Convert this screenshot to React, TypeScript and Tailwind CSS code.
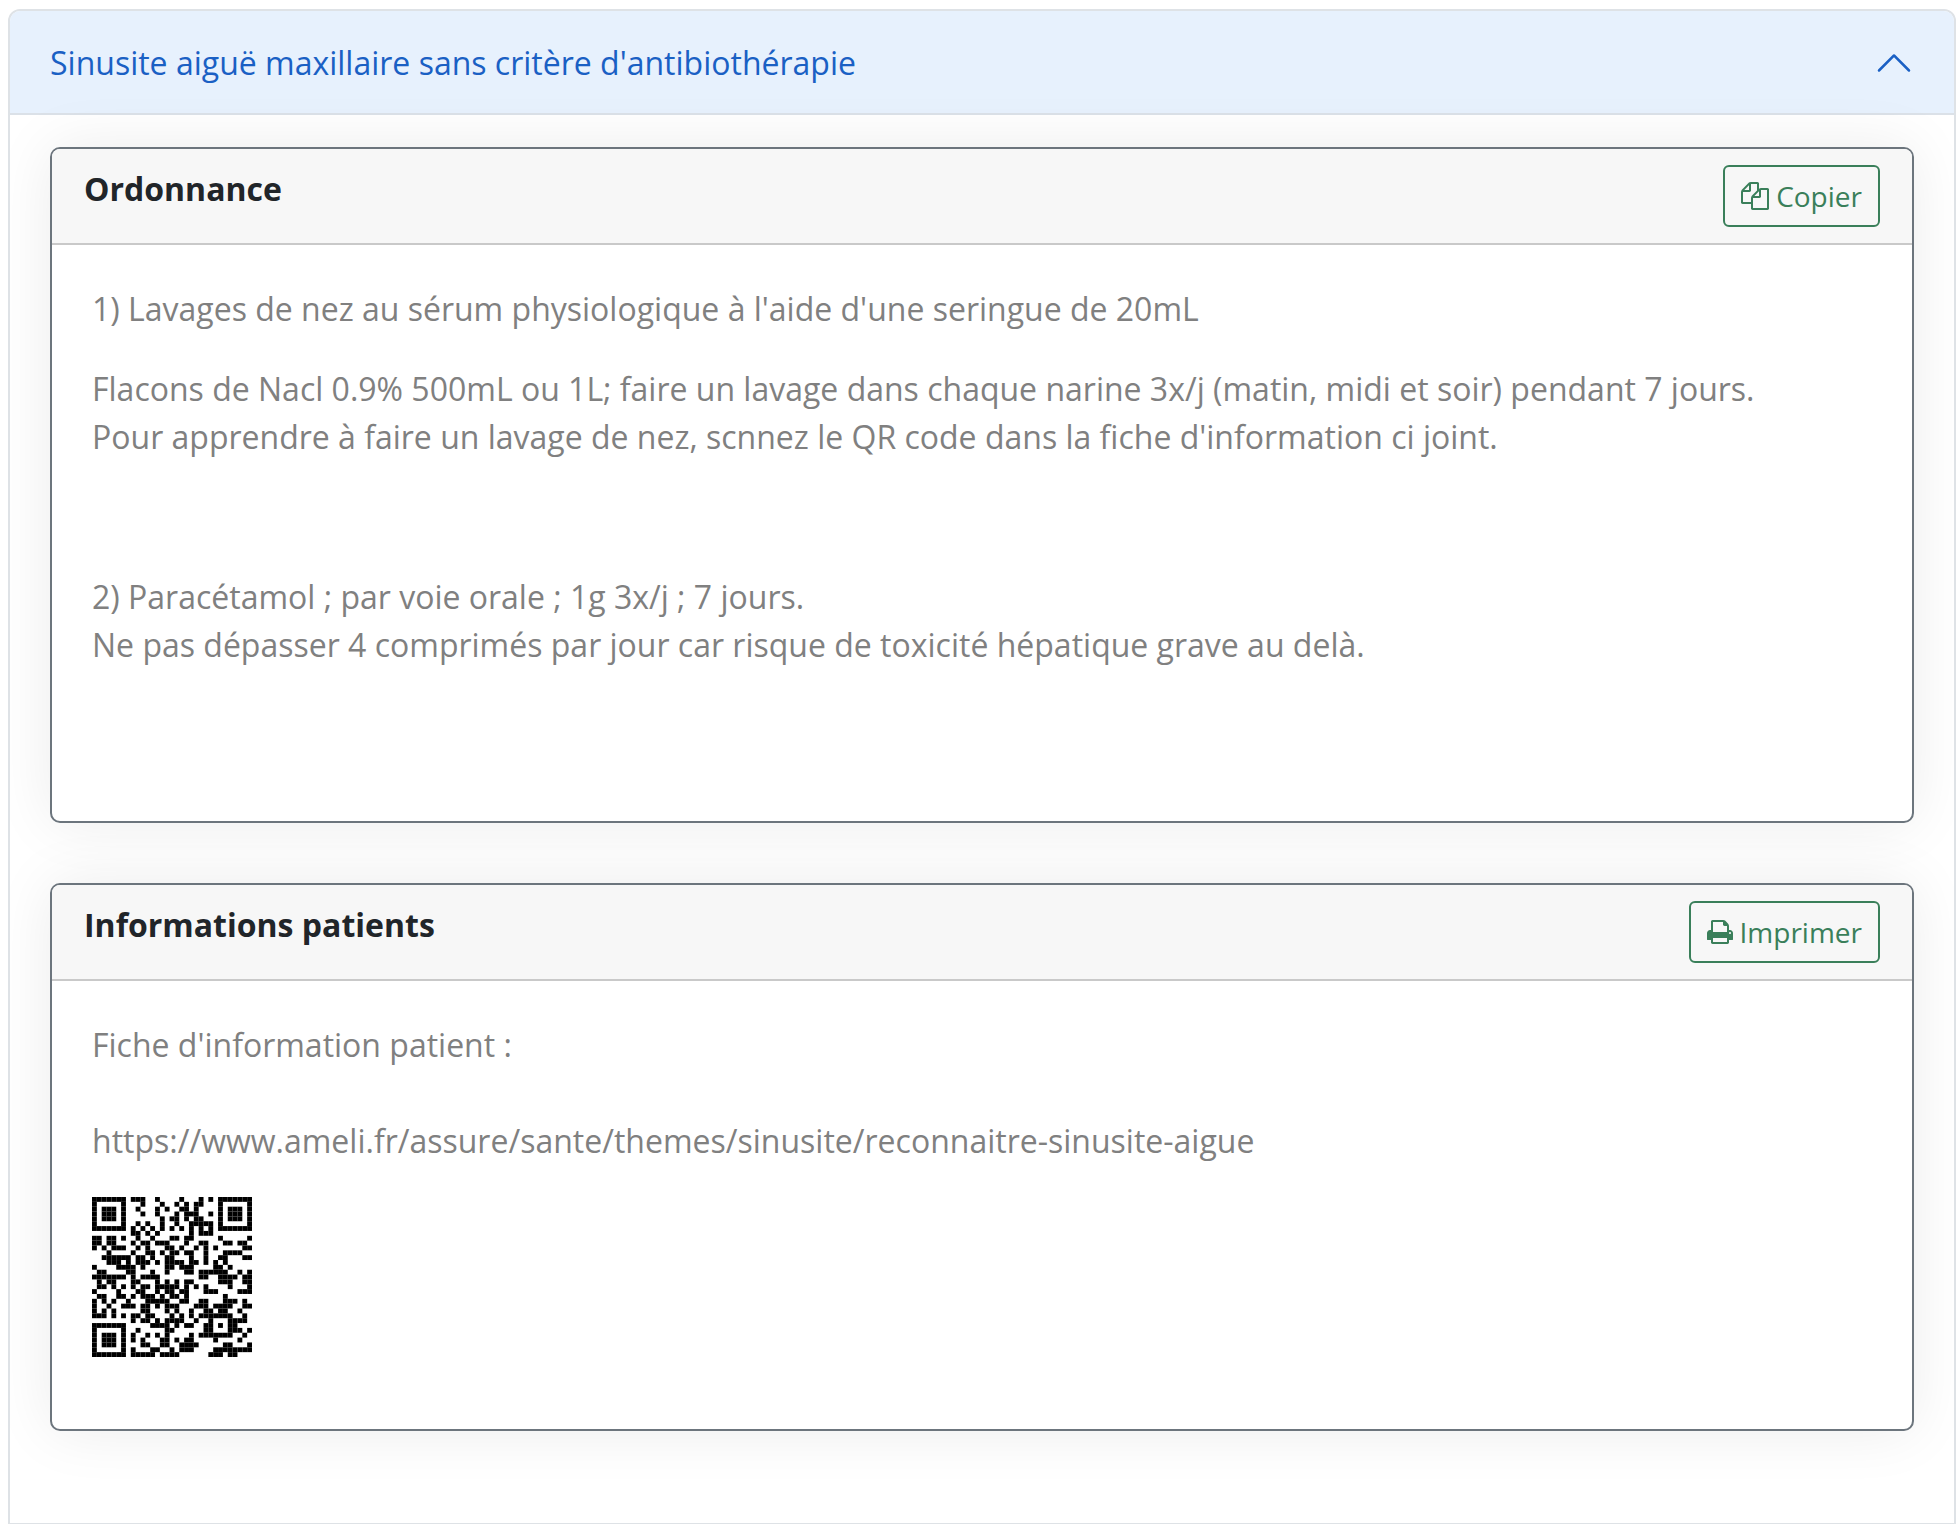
import { useState } from "react";
import type { ReactNode } from "react";

const FICHE_URL = "https://www.ameli.fr/assure/sante/themes/sinusite/reconnaitre-sinusite-aigue";

const QR_SIZE = 33;
const DATA_CODEWORDS = 80;
const EC_CODEWORDS = 20;
const FORMAT_BITS = "110110001000001"; // level L, mask 6

function gfMultiply(a: number, b: number) {
    let result = 0;
    for (let i = 7; i >= 0; i--) {
        result = (result << 1) ^ ((result >>> 7) * 0x11d);
        result ^= ((b >>> i) & 1) * a;
    }
    return result;
}

function errorCorrection(data: number[]) {
    const divisor: number[] = new Array(EC_CODEWORDS).fill(0);
    divisor[EC_CODEWORDS - 1] = 1;
    let root = 1;
    for (let i = 0; i < EC_CODEWORDS; i++) {
        for (let j = 0; j < EC_CODEWORDS; j++) {
            divisor[j] = gfMultiply(divisor[j], root);
            if (j + 1 < EC_CODEWORDS) divisor[j] ^= divisor[j + 1];
        }
        root = gfMultiply(root, 2);
    }

    const rest: number[] = new Array(EC_CODEWORDS).fill(0);
    for (const byte of data) {
        const factor = byte ^ (rest.shift() as number);
        rest.push(0);
        divisor.forEach((d, i) => {
            rest[i] ^= gfMultiply(d, factor);
        });
    }
    return rest;
}

// QR code version 4-L, byte mode (78 characters at most).
function buildQr(text: string) {
    let bits = "0100" + text.length.toString(2).padStart(8, "0");
    for (const char of text) bits += char.charCodeAt(0).toString(2).padStart(8, "0");
    bits += "0000";

    const data: number[] = [];
    for (let i = 0; i < bits.length; i += 8) data.push(parseInt(bits.slice(i, i + 8), 2));
    for (let pad = 0xec; data.length < DATA_CODEWORDS; pad ^= 0xec ^ 0x11) data.push(pad);
    const stream = [...data, ...errorCorrection(data)];

    const grid: (boolean | null)[][] = Array.from({ length: QR_SIZE }, () =>
        new Array(QR_SIZE).fill(null),
    );

    for (let i = 8; i < QR_SIZE - 8; i++) {
        grid[6][i] = i % 2 === 0;
        grid[i][6] = i % 2 === 0;
    }

    const finders = [
        [3, 3],
        [3, QR_SIZE - 4],
        [QR_SIZE - 4, 3],
    ];
    for (const [cy, cx] of finders) {
        for (let dy = -4; dy <= 4; dy++) {
            for (let dx = -4; dx <= 4; dx++) {
                const y = cy + dy;
                const x = cx + dx;
                if (y < 0 || x < 0 || y >= QR_SIZE || x >= QR_SIZE) continue;
                const ring = Math.max(Math.abs(dy), Math.abs(dx));
                grid[y][x] = ring !== 2 && ring !== 4;
            }
        }
    }
    for (let dy = -2; dy <= 2; dy++) {
        for (let dx = -2; dx <= 2; dx++) {
            grid[26 + dy][26 + dx] = Math.max(Math.abs(dy), Math.abs(dx)) !== 1;
        }
    }

    const format = [...FORMAT_BITS].map((bit) => bit === "1");
    const around = [0, 1, 2, 3, 4, 5, 7, 8];
    for (let i = 0; i < 8; i++) grid[8][around[i]] = format[i];
    for (let i = 8; i < 15; i++) grid[around[14 - i]][8] = format[i];
    for (let i = 0; i < 7; i++) grid[QR_SIZE - 1 - i][8] = format[i];
    for (let i = 7; i < 15; i++) grid[8][QR_SIZE - 15 + i] = format[i];
    grid[QR_SIZE - 8][8] = true;

    let index = 0;
    for (let right = QR_SIZE - 1; right >= 1; right -= 2) {
        if (right === 6) right = 5;
        for (let step = 0; step < QR_SIZE; step++) {
            const upward = ((right + 1) & 2) === 0;
            const y = upward ? QR_SIZE - 1 - step : step;
            for (const x of [right, right - 1]) {
                if (grid[y][x] !== null) continue;
                const byte = stream[index >> 3] ?? 0;
                const bit = ((byte >> (7 - (index & 7))) & 1) === 1;
                const masked = (((x * y) % 2) + ((x * y) % 3)) % 2 === 0;
                grid[y][x] = bit !== masked;
                index++;
            }
        }
    }
    return grid;
}

const ficheQr = buildQr(FICHE_URL);

function QrCode() {
    return (
        <svg
            className="mt-8 size-40"
            viewBox={`0 0 ${QR_SIZE} ${QR_SIZE}`}
            role="img"
            aria-label="QR code de la fiche d'information"
        >
            {ficheQr.map((row, y) =>
                row.map((dark, x) =>
                    dark ? <rect key={`${x}-${y}`} x={x} y={y} width="1" height="1" /> : null,
                ),
            )}
        </svg>
    );
}

function ChevronIcon({ open }: { open: boolean }) {
    return (
        <svg
            className={open ? "size-10 shrink-0 rotate-180" : "size-10 shrink-0"}
            viewBox="0 0 16 16"
            fill="currentColor"
            aria-hidden="true"
        >
            <path
                fillRule="evenodd"
                d="M1.646 4.646a.5.5 0 0 1 .708 0L8 10.293l5.646-5.647a.5.5 0 0 1 .708.708l-6 6a.5.5 0 0 1-.708 0l-6-6a.5.5 0 0 1 0-.708z"
            />
        </svg>
    );
}

function CopyIcon() {
    return (
        <svg className="h-7 w-7" viewBox="0 0 1792 1792" fill="currentColor" aria-hidden="true">
            <path d="M1696 384q40 0 68 28t28 68v1216q0 40-28 68t-68 28h-960q-40 0-68-28t-28-68v-288h-544q-40 0-68-28t-28-68v-672q0-40 20-88t48-76l408-408q28-28 76-48t88-20h416q40 0 68 28t28 68v328q68-40 128-40h416zm-544 213l-299 299h299v-299zm-640-384l-299 299h299v-299zm196 647l316-316v-416h-384v416q0 40-28 68t-68 28h-416v640h512v-256q0-40 20-88t48-76zm956 804v-1152h-384v416q0 40-28 68t-68 28h-416v640h896z" />
        </svg>
    );
}

function PrintIcon() {
    return (
        <svg className="h-7 w-[26px]" viewBox="64 0 1664 1792" fill="currentColor" aria-hidden="true">
            <path d="M448 1536h896v-256h-896v256zm0-640h896v-384h-160q-40 0-68-28t-28-68v-160h-640v640zm1152 64q0-26-19-45t-45-19-45 19-19 45 19 45 45 19 45-19 19-45zm128 0v416q0 13-9.5 22.5t-22.5 9.5h-224v160q0 40-28 68t-68 28h-960q-40 0-68-28t-28-68v-160h-224q-13 0-22.5-9.5t-9.5-22.5v-416q0-79 56.5-135.5t135.5-56.5h64v-544q0-40 28-68t68-28h672q40 0 88 20t76 48l152 152q28 28 48 76t20 88v256h64q79 0 135.5 56.5t56.5 135.5z" />
        </svg>
    );
}

type CardProps = {
    title: string;
    action: string;
    icon: ReactNode;
    onAction?: () => void;
    children: ReactNode;
};

function Card({ title, action, icon, onAction, children }: CardProps) {
    return (
        <section className="overflow-hidden rounded-[10px] border-2 border-[#6c757d] bg-white shadow-[0_0_60px_rgba(0,0,0,0.08)]">
            <header className="flex items-start justify-between border-b-2 border-[#c9c9c9] bg-[#f7f7f7] px-8 py-4">
                <h2 className="text-[32px] leading-[48px] font-bold text-[#212529]">{title}</h2>
                <button
                    type="button"
                    onClick={onAction}
                    className="flex items-center gap-[7px] rounded-md border-2 border-[#3a7f5a] px-4 py-2 text-[28px] leading-[42px] text-[#3a7f5a]"
                >
                    {icon}
                    {action}
                </button>
            </header>
            <div className="p-10 text-[32px] leading-[48px] text-[#808080]">{children}</div>
        </section>
    );
}

export default function App() {
    const [open, setOpen] = useState(true);

    return (
        <main className="bg-white pt-[9px] pr-1 pl-2 font-['Open_Sans',sans-serif]">
            <div className="overflow-hidden rounded-t-xl border-2 border-[#dee2e6]">
                <h1 className="border-b-2 border-[#dbe1e8]">
                    <button
                        type="button"
                        aria-expanded={open}
                        aria-controls="sinusite"
                        onClick={() => setOpen(!open)}
                        className="flex w-full items-center justify-between bg-[#e7f1fd] px-10 pt-8 pb-[30px] text-left text-[32px] leading-10 text-[#1a60c4]"
                    >
                        Sinusite aiguë maxillaire sans critère d'antibiothérapie
                        <ChevronIcon open={open} />
                    </button>
                </h1>

                {open && (
                    <div id="sinusite" className="flex flex-col gap-[60px] px-10 pt-8 pb-[92px]">
                        <Card title="Ordonnance" action="Copier" icon={<CopyIcon />}>
                            <p>1) Lavages de nez au sérum physiologique à l'aide d'une seringue de 20mL</p>
                            <p className="mt-8">
                                Flacons de Nacl 0.9% 500mL ou 1L; faire un lavage dans chaque narine 3x/j (matin, midi et
                                soir) pendant 7 jours.
                                <br />
                                Pour apprendre à faire un lavage de nez, scnnez le QR code dans la fiche d'information ci
                                joint.
                            </p>
                            <p className="mt-28 pb-28">
                                2) Paracétamol ; par voie orale ; 1g 3x/j ; 7 jours.
                                <br />
                                Ne pas dépasser 4 comprimés par jour car risque de toxicité hépatique grave au delà.
                            </p>
                        </Card>

                        <Card
                            title="Informations patients"
                            action="Imprimer"
                            icon={<PrintIcon />}
                            onAction={() => window.print()}
                        >
                            <p>Fiche d'information patient :</p>
                            <p className="mt-12">{FICHE_URL}</p>
                            <div className="pb-8">
                                <QrCode />
                            </div>
                        </Card>
                    </div>
                )}
            </div>
        </main>
    );
}
